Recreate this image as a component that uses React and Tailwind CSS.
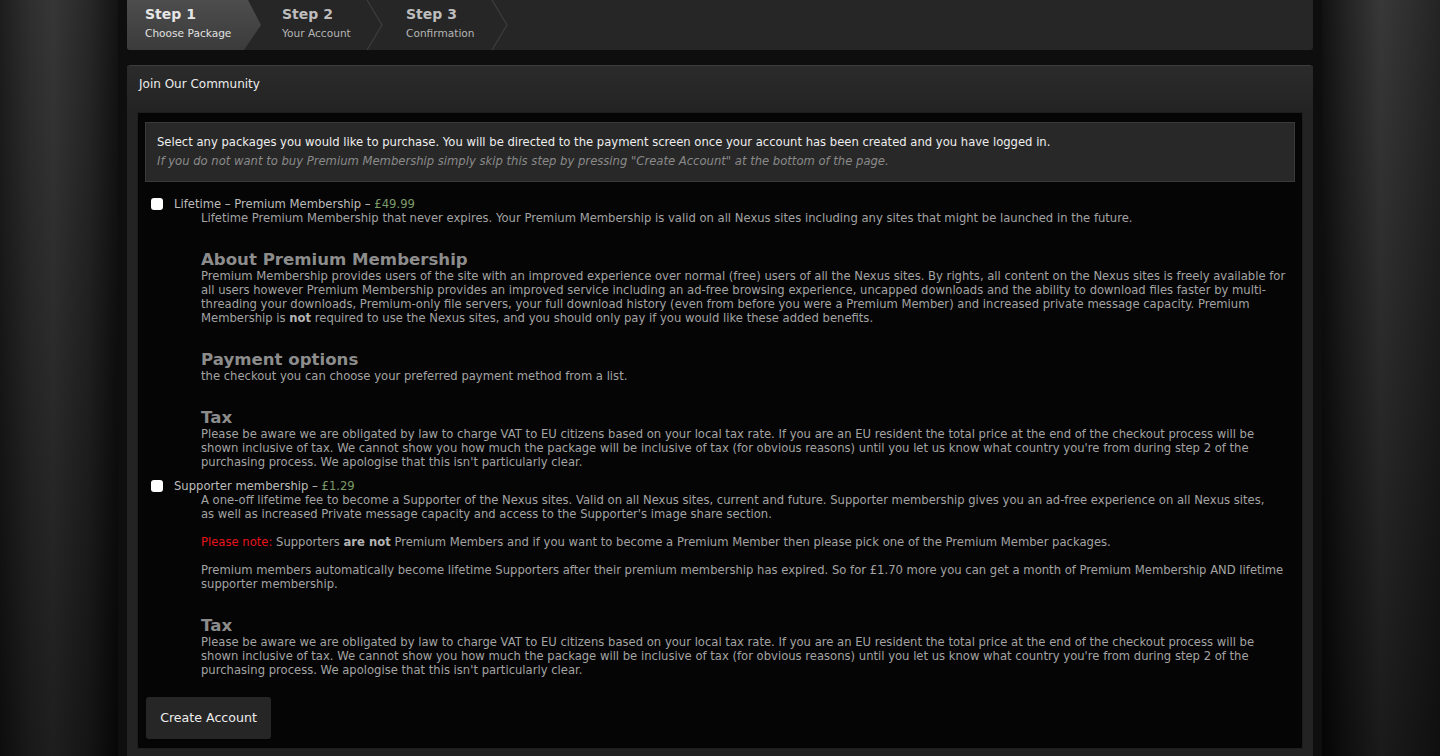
import React from 'react';

const font = { fontFamily: '"DejaVu Sans", Verdana, sans-serif' };

function Chevron() {
    return (
        <svg className="w-[18px] h-[50px] shrink-0" viewBox="0 0 18 50" fill="none">
            <path d="M1 0 L16 25 L1 50" stroke="#3d3d3d" strokeWidth="1.2" />
        </svg>
    );
}

function Steps() {
    return (
        <div className="flex h-[50px] bg-[#262626] rounded-b-[3px] overflow-hidden">
            <div className="w-[134px] shrink-0 bg-[linear-gradient(to_bottom,#4d4d4d,#3b3b3b)] [clip-path:polygon(0_0,121px_0,134px_50%,117px_100%,0_100%)] pl-[18px] pt-[5px]">
                <div className="text-[14px] leading-[18px] font-bold text-[#e6e6e6]">Step 1</div>
                <div className="mt-[2px] text-[10.6px] leading-[16px] text-[#e0e0e0]">Choose Package</div>
            </div>
            <div className="w-[105px] shrink-0 pl-[21px] pt-[5px]">
                <div className="text-[14px] leading-[18px] font-bold text-[#bdbdbd]">Step 2</div>
                <div className="mt-[2px] text-[10.6px] leading-[16px] text-[#b5b5b5]">Your Account</div>
            </div>
            <Chevron />
            <div className="w-[107px] shrink-0 pl-[22px] pt-[5px]">
                <div className="text-[14px] leading-[18px] font-bold text-[#bdbdbd]">Step 3</div>
                <div className="mt-[2px] text-[10.6px] leading-[16px] text-[#b5b5b5]">Confirmation</div>
            </div>
            <Chevron />
        </div>
    );
}

function Heading({ children }) {
    return <h3 className="mt-[25px] text-[16.6px] leading-[19px] font-bold text-[#8c8c8c]">{children}</h3>;
}

function TaxBlock() {
    return (
        <>
            <Heading>Tax</Heading>
            <p>
                Please be aware we are obligated by law to charge VAT to EU citizens based on your local tax rate. If you are an EU resident the total price at the end of the checkout process will be shown inclusive of tax. We cannot show you how much the package will be inclusive of tax (for obvious reasons) until you let us know what country you're from during step 2 of the purchasing process. We apologise that this isn't particularly clear.
            </p>
        </>
    );
}

function PackageLabel({ name, price }) {
    return (
        <label className="flex items-center h-[14px]">
            <input type="checkbox" className="appearance-none w-[12px] h-[12px] rounded-[3px] bg-white ml-[6px] mr-[11px]" />
            <span className="text-[#bcbcbc]">{name} – <span className="text-[#7b9b69]">{price}</span></span>
        </label>
    );
}

export default function App() {
    return (
        <div className="flex w-full h-[756px] overflow-hidden bg-[#0c0c0c] text-[11.6px] leading-[14px]" style={font}>
            <div className="w-[118px] shrink-0 bg-[linear-gradient(to_right,#141414_0%,#262626_25%,#2e2e2e_45%,#1f1f1f_75%,#0a0a0a_100%)]">
                <div className="h-full bg-[linear-gradient(to_bottom,rgba(255,255,255,0.04),rgba(0,0,0,0.35))]" />
            </div>

            <div className="w-[1204px] shrink-0 px-[9px] bg-[#0e0e0e]">
                <Steps />

                <div className="mt-[15px] rounded-t-[4px] bg-[#232323] border-t border-[#3e3e3e] h-[700px]">
                    <div className="h-[46px] pl-[12px] pt-[10px] bg-[linear-gradient(to_bottom,#2b2b2b,#232323)] text-[12px] leading-[16px] text-[#ececec]">
                        Join Our Community
                    </div>

                    <div className="px-[10px]">
                        <div className="bg-[#050505] border border-[#1d1d1d] px-[7px] pt-[9px] pb-[9px] text-[#a3a3a3]">
                            <div className="bg-[#282828] border border-[#3a3a3a] pl-[11px] pt-[10px] pb-[10px] leading-[19px]">
                                <p className="text-[#eeeeee]">Select any packages you would like to purchase. You will be directed to the payment screen once your account has been created and you have logged in.</p>
                                <p className="italic text-[#8a8a8a]">If you do not want to buy Premium Membership simply skip this step by pressing "Create Account" at the bottom of the page.</p>
                            </div>

                            <div className="mt-[15px]">
                                <PackageLabel name="Lifetime – Premium Membership" price="£49.99" />
                                <div className="ml-[56px] mr-[5px]">
                                    <p>Lifetime Premium Membership that never expires. Your Premium Membership is valid on all Nexus sites including any sites that might be launched in the future.</p>
                                    <Heading>About Premium Membership</Heading>
                                    <p>
                                        Premium Membership provides users of the site with an improved experience over normal (free) users of all the Nexus sites. By rights, all content on the Nexus sites is freely available for all users however Premium Membership provides an improved service including an ad-free browsing experience, uncapped downloads and the ability to download files faster by multi-threading your downloads, Premium-only file servers, your full download history (even from before you were a Premium Member) and increased private message capacity. Premium Membership is <b className="text-[#b4b4b4]">not</b> required to use the Nexus sites, and you should only pay if you would like these added benefits.
                                    </p>
                                    <Heading>Payment options</Heading>
                                    <p>the checkout you can choose your preferred payment method from a list.</p>
                                    <TaxBlock />
                                </div>
                            </div>

                            <div className="mt-[10px]">
                                <PackageLabel name="Supporter membership" price="£1.29" />
                                <div className="ml-[56px] mr-[5px]">
                                    <p>A one-off lifetime fee to become a Supporter of the Nexus sites. Valid on all Nexus sites, current and future. Supporter membership gives you an ad-free experience on all Nexus sites, as{'\u00a0'}well as increased Private message capacity and access to the Supporter's image share section.</p>
                                    <p className="mt-[14px]">
                                        <span className="text-[#e8141c]">Please note:</span> Supporters <b className="text-[#b4b4b4]">are not</b> Premium Members and if you want to become a Premium Member then please pick one of the Premium Member packages.
                                    </p>
                                    <p className="mt-[14px]">Premium members automatically become lifetime Supporters after their premium membership has expired. So for £1.70 more you can get a month of Premium Membership AND lifetime supporter membership.</p>
                                    <TaxBlock />
                                </div>
                            </div>

                            <button className="mt-[20px] ml-[1px] h-[42px] w-[125px] rounded-[3px] bg-[#262626] text-[12.6px] text-[#ededed]">
                                Create Account
                            </button>
                        </div>
                    </div>
                </div>
            </div>

            <div className="flex-1 bg-[linear-gradient(to_right,#080808_0%,#1a1a1a_20%,#303030_50%,#262626_75%,#1b1b1b_100%)]">
                <div className="h-full bg-[linear-gradient(to_bottom,rgba(255,255,255,0.04),rgba(0,0,0,0.45))]" />
            </div>
        </div>
    );
}
